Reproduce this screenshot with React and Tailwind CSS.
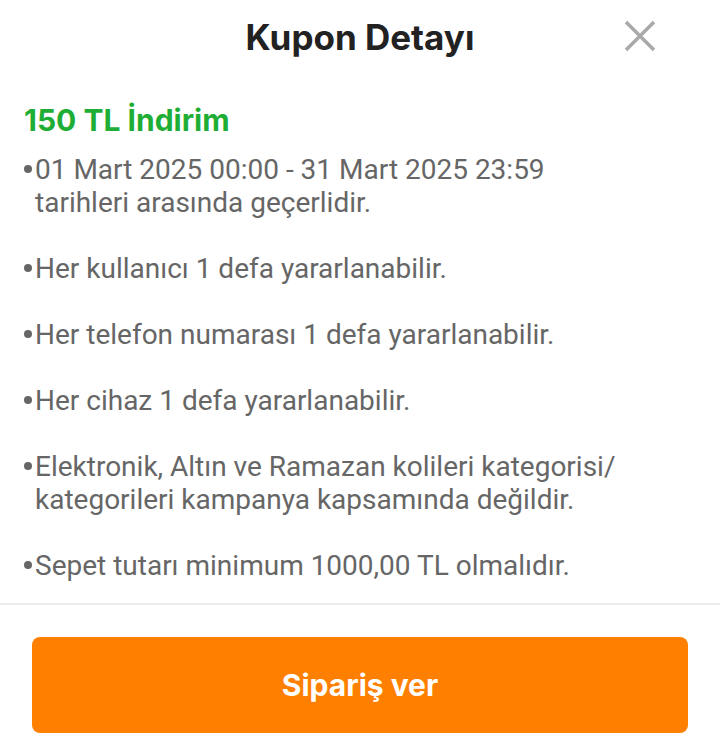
export default function App() {
  const items = [
    ["01 Mart 2025 00:00 - 31 Mart 2025 23:59", "tarihleri arasında geçerlidir."],
    ["Her kullanıcı 1 defa yararlanabilir."],
    ["Her telefon numarası 1 defa yararlanabilir."],
    ["Her cihaz 1 defa yararlanabilir."],
    ["Elektronik, Altın ve Ramazan kolileri kategorisi/", "kategorileri kampanya kapsamında değildir."],
    ["Sepet tutarı minimum 1000,00 TL olmalıdır."],
  ];
  return (
    <div className="w-[720px] h-[735px] bg-white overflow-hidden flex flex-col">
      <div className="relative h-[74px] flex items-center justify-center">
        <h1 className="text-[35px] font-bold text-[#222222] font-['Inter',sans-serif]">Kupon Detayı</h1>
        <button className="absolute right-[64px] top-[20px] w-[32px] h-[32px] flex items-center justify-center">
          <svg width="32" height="32" viewBox="0 0 32 32">
            <path d="M2 2 L30 30 M30 2 L2 30" stroke="#a9a9a9" strokeWidth="3.5" strokeLinecap="butt" />
          </svg>
        </button>
      </div>
      <div className="flex-1 px-[24px] pt-[27px] font-['Roboto',sans-serif]">
        <div className="text-[30px] font-bold text-[#1fae35] font-['Inter',sans-serif] leading-[38px]">150 TL İndirim</div>
        <div className="mt-[14px] flex flex-col gap-[33px] text-[28px] leading-[33px] text-[#666666]">
          {items.map((lines, i) => (
            <div key={i} className="flex">
              <span className="w-[11px] h-[33px] shrink-0 flex items-center">
                <span className="block w-[8px] h-[8px] rounded-full bg-[#666666] -mt-[2px]" />
              </span>
              <div className="flex flex-col">
                {lines.map((l, j) => (
                  <span key={j}>{l}</span>
                ))}
              </div>
            </div>
          ))}
        </div>
      </div>
      <div className="h-[2px] bg-[#ececec]" />
      <div className="px-[32px] pt-[32px] pb-[2px]">
        <button className="w-full h-[96px] rounded-[8px] bg-[#ff8000] text-white text-[30px] font-bold font-['Inter',sans-serif]">
          Sipariş ver
        </button>
      </div>
    </div>
  );
}
